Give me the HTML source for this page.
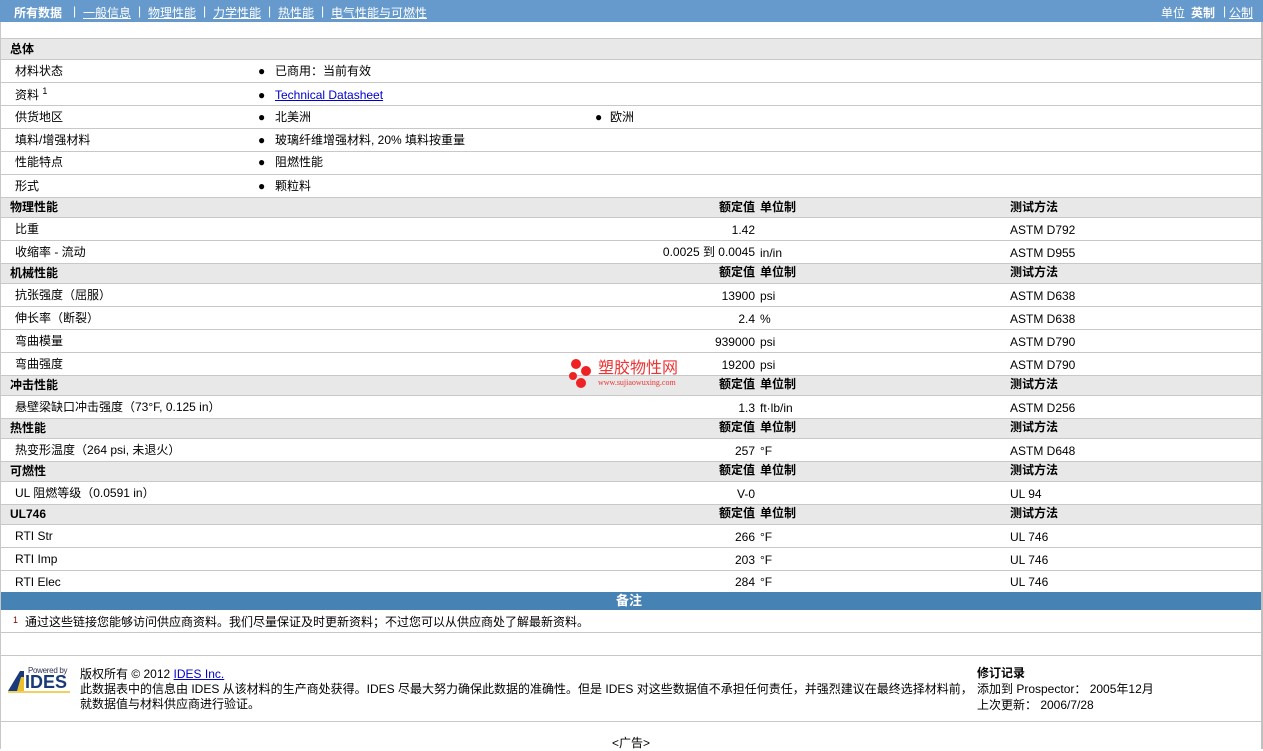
<!DOCTYPE html>
<html><head><meta charset="utf-8"><style>
*{margin:0;padding:0;box-sizing:border-box}
body{width:1263px;height:749px;overflow:hidden;background:#fff;font-family:"Liberation Sans","Noto Sans CJK SC",sans-serif;font-size:12px;color:#000;position:relative}
.a{position:absolute;white-space:nowrap}
#top{left:0;top:0;width:1263px;height:22px;background:#6699cc;color:#fff}
#top span{position:absolute;top:4px}
#top u{color:#fff}
.wrap{position:absolute;left:0;top:22px;width:1263px;height:727px;border-right:2px solid #c0c0c0;border-left:1px solid #c8c8c8}
.r{position:absolute;left:1px;width:1260px;border-bottom:1px solid #c8c8c8}
.s{background:#e8e8e8;font-weight:bold}
.r span{position:absolute;line-height:14px}
.v{right:506px;text-align:right}
.sup{font-size:9px;position:relative;top:-5px}
</style></head><body>
<div class="a" id="top">
<span style="left:14px;font-weight:bold">所有数据</span>
<span style="left:73px">|</span><span style="left:83px"><u>一般信息</u></span>
<span style="left:138px">|</span><span style="left:148px"><u>物理性能</u></span>
<span style="left:203px">|</span><span style="left:213px"><u>力学性能</u></span>
<span style="left:268px">|</span><span style="left:278px"><u>热性能</u></span>
<span style="left:321px">|</span><span style="left:331px"><u>电气性能与可燃性</u></span>
<span style="left:1161px">单位</span><span style="left:1191px;font-weight:bold">英制</span>
<span style="left:1223px">|</span><span style="left:1229px"><u>公制</u></span>
</div>
<div class="wrap"></div>
<div class="r" style="top:38px;height:1px;background:#c8c8c8;border:0"></div>

<div class="r s" style="top:39px;height:21px"><span style="left:9px;top:3px">总体</span></div>
<div class="r" style="top:60px;height:23px"><span style="left:14px;top:4px">材料状态</span><span style="left:257px;top:4px">●</span><span style="left:274px;top:4px">已商用：当前有效</span></div>
<div class="r" style="top:83px;height:23px"><span style="left:14px;top:5px">资料 <span class="sup" style="position:relative;line-height:0">1</span></span><span style="left:257px;top:5px">●</span><span style="left:274px;top:5px;color:#00c"><u>Technical Datasheet</u></span></div>
<div class="r" style="top:106px;height:23px"><span style="left:14px;top:4px">供货地区</span><span style="left:257px;top:4px">●</span><span style="left:274px;top:4px">北美洲</span><span style="left:594px;top:4px">●</span><span style="left:609px;top:4px">欧洲</span></div>
<div class="r" style="top:129px;height:23px"><span style="left:14px;top:4px">填料/增强材料</span><span style="left:257px;top:4px">●</span><span style="left:274px;top:4px">玻璃纤维增强材料, 20% 填料按重量</span></div>
<div class="r" style="top:152px;height:23px"><span style="left:14px;top:3px">性能特点</span><span style="left:257px;top:3px">●</span><span style="left:274px;top:3px">阻燃性能</span></div>
<div class="r" style="top:175px;height:23px"><span style="left:14px;top:4px">形式</span><span style="left:257px;top:4px">●</span><span style="left:274px;top:4px">颗粒料</span></div>

<div class="r s" style="top:198px;height:20px"><span style="left:9px;top:2px">物理性能</span><span class="v" style="top:2px">额定值</span><span style="left:759px;top:2px">单位制</span><span style="left:1009px;top:2px">测试方法</span></div>
<div class="r" style="top:218px;height:23px"><span style="left:14px;top:4px">比重</span><span class="v" style="top:5px">1.42</span><span style="left:1009px;top:5px">ASTM D792</span></div>
<div class="r" style="top:241px;height:23px"><span style="left:14px;top:4px">收缩率 - 流动</span><span class="v" style="top:4px">0.0025 到 0.0045</span><span style="left:759px;top:5px">in/in</span><span style="left:1009px;top:5px">ASTM D955</span></div>

<div class="r s" style="top:264px;height:20px"><span style="left:9px;top:2px">机械性能</span><span class="v" style="top:1px">额定值</span><span style="left:759px;top:1px">单位制</span><span style="left:1009px;top:1px">测试方法</span></div>
<div class="r" style="top:284px;height:23px"><span style="left:14px;top:4px">抗张强度（屈服）</span><span class="v" style="top:5px">13900</span><span style="left:759px;top:5px">psi</span><span style="left:1009px;top:5px">ASTM D638</span></div>
<div class="r" style="top:307px;height:23px"><span style="left:14px;top:4px">伸长率（断裂）</span><span class="v" style="top:5px">2.4</span><span style="left:759px;top:5px">%</span><span style="left:1009px;top:5px">ASTM D638</span></div>
<div class="r" style="top:330px;height:23px"><span style="left:14px;top:4px">弯曲模量</span><span class="v" style="top:5px">939000</span><span style="left:759px;top:5px">psi</span><span style="left:1009px;top:5px">ASTM D790</span></div>
<div class="r" style="top:353px;height:23px"><span style="left:14px;top:4px">弯曲强度</span><span class="v" style="top:5px">19200</span><span style="left:759px;top:5px">psi</span><span style="left:1009px;top:5px">ASTM D790</span></div>

<div class="r s" style="top:376px;height:20px"><span style="left:9px;top:2px">冲击性能</span><span class="v" style="top:1px">额定值</span><span style="left:759px;top:1px">单位制</span><span style="left:1009px;top:1px">测试方法</span></div>
<div class="r" style="top:396px;height:23px"><span style="left:14px;top:4px">悬壁梁缺口冲击强度（73°F, 0.125 in）</span><span class="v" style="top:5px">1.3</span><span style="left:759px;top:5px">ft·lb/in</span><span style="left:1009px;top:5px">ASTM D256</span></div>

<div class="r s" style="top:419px;height:20px"><span style="left:9px;top:2px">热性能</span><span class="v" style="top:1px">额定值</span><span style="left:759px;top:1px">单位制</span><span style="left:1009px;top:1px">测试方法</span></div>
<div class="r" style="top:439px;height:23px"><span style="left:14px;top:4px">热变形温度（264 psi, 未退火）</span><span class="v" style="top:5px">257</span><span style="left:759px;top:5px">°F</span><span style="left:1009px;top:5px">ASTM D648</span></div>

<div class="r s" style="top:462px;height:20px"><span style="left:9px;top:2px">可燃性</span><span class="v" style="top:1px">额定值</span><span style="left:759px;top:1px">单位制</span><span style="left:1009px;top:1px">测试方法</span></div>
<div class="r" style="top:482px;height:23px"><span style="left:14px;top:4px">UL 阻燃等级（0.0591 in）</span><span class="v" style="top:5px">V-0</span><span style="left:1009px;top:5px">UL 94</span></div>

<div class="r s" style="top:505px;height:20px"><span style="left:9px;top:2px">UL746</span><span class="v" style="top:1px">额定值</span><span style="left:759px;top:1px">单位制</span><span style="left:1009px;top:1px">测试方法</span></div>
<div class="r" style="top:525px;height:23px"><span style="left:14px;top:4px">RTI Str</span><span class="v" style="top:5px">266</span><span style="left:759px;top:5px">°F</span><span style="left:1009px;top:5px">UL 746</span></div>
<div class="r" style="top:548px;height:23px"><span style="left:14px;top:4px">RTI Imp</span><span class="v" style="top:5px">203</span><span style="left:759px;top:5px">°F</span><span style="left:1009px;top:5px">UL 746</span></div>
<div class="r" style="top:571px;height:21px;border:0"><span style="left:14px;top:4px">RTI Elec</span><span class="v" style="top:4px">284</span><span style="left:759px;top:4px">°F</span><span style="left:1009px;top:4px">UL 746</span></div>

<div class="r" style="top:592px;height:18px;background:#4682b4;border:0;color:#fff;font-weight:bold;font-size:13px"><span style="left:615px;top:1px;line-height:16px">备注</span></div>
<div class="r" style="top:610px;height:23px"><span style="left:12px;top:3px;font-size:9px;color:#800">1</span><span style="left:24px;top:5px">通过这些链接您能够访问供应商资料。我们尽量保证及时更新资料；不过您可以从供应商处了解最新资料。</span></div>
<div class="r" style="top:633px;height:23px"></div>

<div class="a" style="left:8px;top:667px;width:62px;height:26px">
<div style="position:absolute;left:20px;top:-1px;font-size:8px;color:#335;letter-spacing:-0.3px">Powered by</div>
<svg width="22" height="24" style="position:absolute;left:0;top:2px"><polygon points="0,22 12,2 16,2 16,22" fill="#1a3a7a"/><polygon points="9,22 13,8 16,8 16,22" fill="#e8c030"/></svg>
<div style="position:absolute;left:17px;top:6px;font-weight:bold;font-size:18px;color:#1a3a7a;line-height:18px">IDES</div>
<div style="position:absolute;left:0;top:24px;width:62px;height:2px;background:#f0d060"></div>
</div>
<div class="a" style="left:80px;top:667px;line-height:15px">版权所有 © 2012 <u style="color:#00c">IDES Inc.</u><br>此数据表中的信息由 IDES 从该材料的生产商处获得。IDES 尽最大努力确保此数据的准确性。但是 IDES 对这些数据值不承担任何责任，并强烈建议在最终选择材料前，<br>就数据值与材料供应商进行验证。</div>
<div class="a" style="left:977px;top:665px;line-height:16px"><b>修订记录</b><br>添加到 Prospector： 2005年12月<br>上次更新： 2006/7/28</div>
<div class="r" style="top:721px;height:1px;background:#c8c8c8;border:0"></div>
<div class="a" style="left:612px;top:734px">&lt;广告&gt;</div>

<div class="a" style="left:568px;top:358px;width:130px;height:36px">
<svg width="30" height="34" style="position:absolute;left:0;top:0"><circle cx="8" cy="6" r="5" fill="#e22"/><circle cx="18" cy="13" r="5" fill="#e22"/><circle cx="5" cy="18" r="4" fill="#e22"/><circle cx="13" cy="25" r="5" fill="#e22"/></svg>
<div style="position:absolute;left:30px;top:2px;color:#e33;font-size:16px;line-height:18px">塑胶物性网</div>
<div style="position:absolute;left:30px;top:20px;color:#e33;font-size:8px;font-family:'Liberation Serif',serif">www.sujiaowuxing.com</div>
</div>
</body></html>
